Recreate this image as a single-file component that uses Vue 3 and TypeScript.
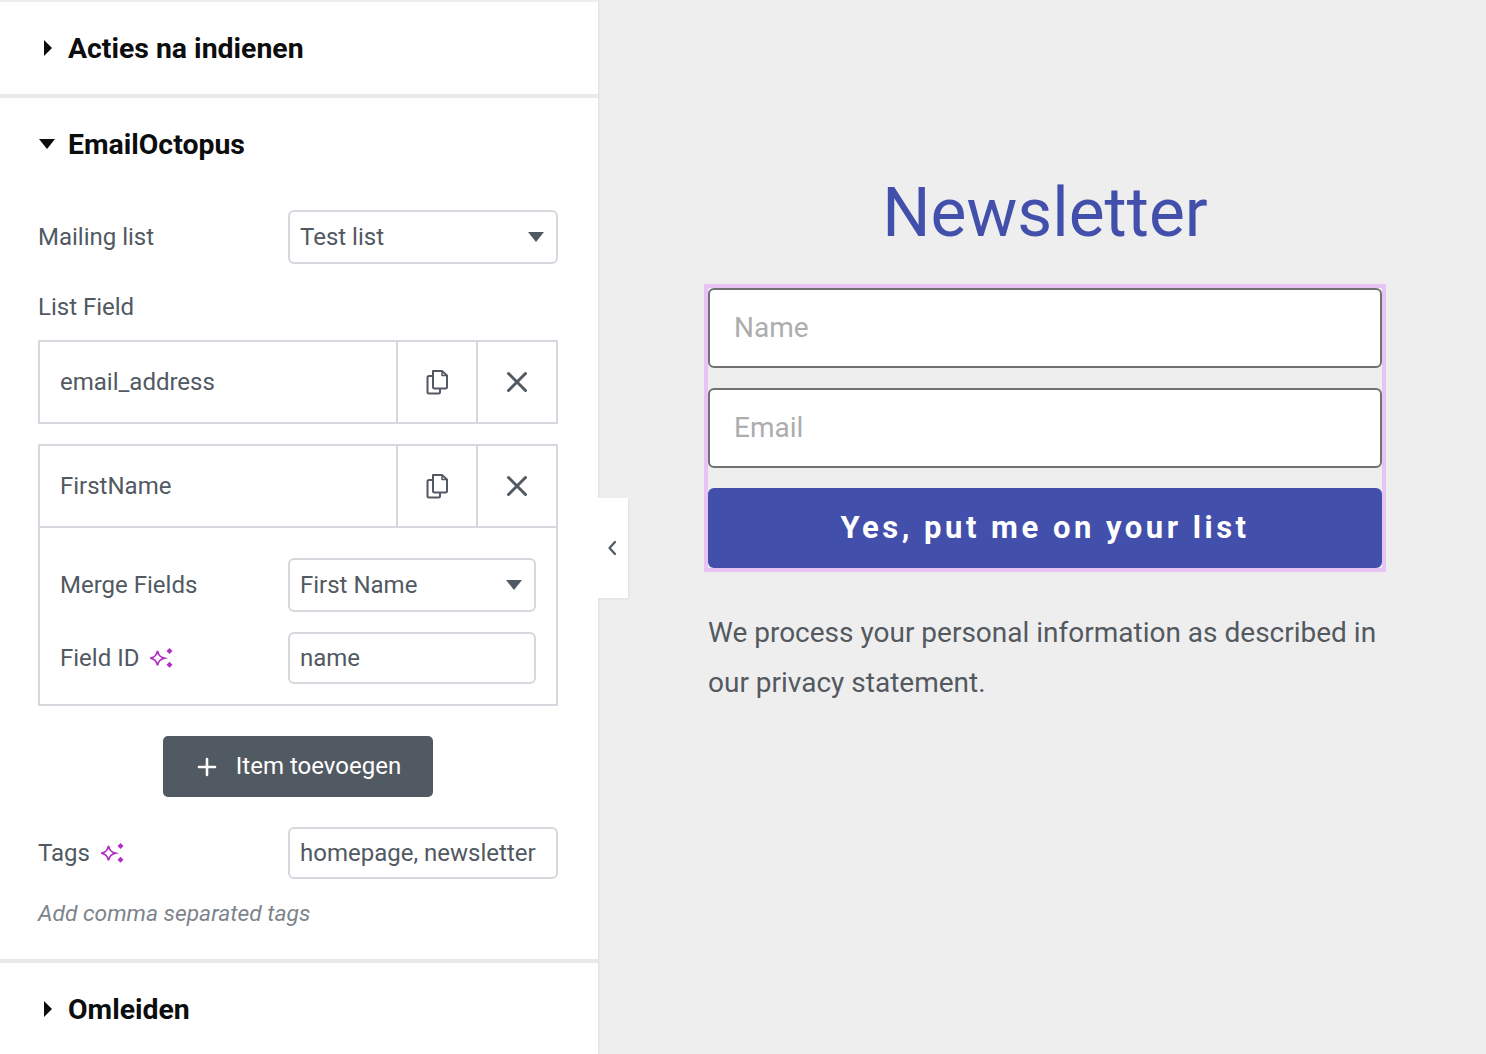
<script setup lang="ts">
const sparkle = {
  star: 'M7.5 5C8.400 9.300 9.900 11 14.500 12.200C9.900 13.400 8.400 15.100 7.500 19.400C6.600 15.100 5.100 13.400 0.500 12.200C5.100 11 6.600 9.300 7.500 5Z',
  top: 'M19.500 2L22.500 5L19.500 8L16.500 5Z',
  bottom: 'M19.500 15.800L22.500 18.800L19.500 21.800L16.500 18.800Z'
}
</script>

<template>
  <div class="page">
    <aside class="panel">
      <section class="section first">
        <header class="head">
          <span class="tri-right"></span>
          <h2>Acties na indienen</h2>
        </header>
      </section>

      <section class="section">
        <header class="head">
          <span class="tri-down"></span>
          <h2>EmailOctopus</h2>
        </header>
        <div class="body">
          <div class="row">
            <span class="label">Mailing list</span>
            <div class="control select">
              <span>Test list</span><i class="caret"></i>
            </div>
          </div>
          <div class="label list-label">List Field</div>

          <div class="item">
            <div class="item-head">
              <span class="item-title">email_address</span>
              <button class="tool" type="button" aria-label="Duplicate">
                <svg width="24" height="26" viewBox="0 0 24 26" fill="none" stroke="#515962" stroke-width="2" stroke-linejoin="round">
                  <path d="M8 2H17L22 6.500V18C22 19 21.500 19.500 20.500 19.500H9.500C8.500 19.500 8 19 8 18Z"/>
                  <path d="M17 2V6.500H22" stroke-width="1.500"/>
                  <path d="M8 7H4C3 7 2.500 7.500 2.500 8.500V23C2.500 24 3 24.500 4 24.500H13.500C14.500 24.500 15 24 15 23V19.500"/>
                </svg>
              </button>
              <button class="tool" type="button" aria-label="Remove">
                <svg width="22" height="22" viewBox="0 0 22 22" fill="none" stroke="#515962" stroke-width="3" stroke-linecap="round"><path d="M2.500 2.500L19.500 19.500M19.500 2.500L2.500 19.500"/></svg>
              </button>
            </div>
          </div>

          <div class="item open">
            <div class="item-head">
              <span class="item-title">FirstName</span>
              <button class="tool" type="button" aria-label="Duplicate">
                <svg width="24" height="26" viewBox="0 0 24 26" fill="none" stroke="#515962" stroke-width="2" stroke-linejoin="round">
                  <path d="M8 2H17L22 6.500V18C22 19 21.500 19.500 20.500 19.500H9.500C8.500 19.500 8 19 8 18Z"/>
                  <path d="M17 2V6.500H22" stroke-width="1.500"/>
                  <path d="M8 7H4C3 7 2.500 7.500 2.500 8.500V23C2.500 24 3 24.500 4 24.500H13.500C14.500 24.500 15 24 15 23V19.500"/>
                </svg>
              </button>
              <button class="tool" type="button" aria-label="Remove">
                <svg width="22" height="22" viewBox="0 0 22 22" fill="none" stroke="#515962" stroke-width="3" stroke-linecap="round"><path d="M2.500 2.500L19.500 19.500M19.500 2.500L2.500 19.500"/></svg>
              </button>
            </div>
            <div class="item-body">
              <div class="row">
                <span class="label">Merge Fields</span>
                <div class="control select small">
                  <span>First Name</span><i class="caret"></i>
                </div>
              </div>
              <div class="row second">
                <span class="label with-icon">Field ID
                  <svg class="spark" width="24" height="24" viewBox="0 0 24 24">
                    <path :d="sparkle.star" fill="none" stroke="#b22fc4" stroke-width="1.800"/>
                    <path :d="sparkle.top" fill="#b22fc4"/><path :d="sparkle.bottom" fill="#b22fc4"/>
                  </svg>
                </span>
                <div class="control small input">name</div>
              </div>
            </div>
          </div>

          <div class="add-wrap">
            <button class="add" type="button">
              <svg width="20" height="20" viewBox="0 0 20 20" stroke="#fff" stroke-width="2.600" stroke-linecap="round"><path d="M10 2V18M2 10H18"/></svg>
              <span class="add-text">Item toevoegen</span>
            </button>
          </div>

          <div class="row tags">
            <span class="label with-icon">Tags
              <svg class="spark" width="24" height="24" viewBox="0 0 24 24">
                <path :d="sparkle.star" fill="none" stroke="#b22fc4" stroke-width="1.800"/>
                <path :d="sparkle.top" fill="#b22fc4"/><path :d="sparkle.bottom" fill="#b22fc4"/>
              </svg>
            </span>
            <div class="control input tag-input">homepage, newsletter</div>
          </div>
          <p class="hint">Add comma separated tags</p>
        </div>
      </section>

      <section class="section last">
        <header class="head">
          <span class="tri-right"></span>
          <h2>Omleiden</h2>
        </header>
      </section>

      <button class="collapse" type="button" aria-label="Collapse">
        <svg class="chev" width="10" height="16" viewBox="0 0 10 16" fill="none" stroke="#515962" stroke-width="2.200" stroke-linecap="round" stroke-linejoin="round"><path d="M8 2L2.500 8L8 14"/></svg>
      </button>
    </aside>

    <main class="preview">
      <h1>Newsletter</h1>
      <form class="form" @submit.prevent>
        <input class="field" type="text" placeholder="Name" />
        <input class="field" type="text" placeholder="Email" />
        <button class="submit" type="submit">Yes, put me on your list</button>
      </form>
      <p class="note">We process your personal information as described in our privacy statement.</p>
    </main>
  </div>
</template>

<style>
html, body { margin: 0; background: #eeeeef; }
</style>

<style scoped>
.page {
  display: flex;
  width: 1486px;
  height: 1054px;
  overflow: hidden;
  font-family: Roboto, "Liberation Sans", sans-serif;
  color: #515962;
}
.panel {
  position: relative;
  width: 598px;
  flex: none;
  background: #fff;
  box-shadow: 1px 0 2px rgba(0, 0, 0, 0.06);
}
.section { border-bottom: 4px solid #e8e9ea; }
.section.first { border-top: 2px solid #eceded; }
.section.last { border-bottom: 0; }
.head {
  display: flex;
  align-items: center;
  height: 92px;
  padding-left: 38px;
}
.head h2 {
  margin: 0;
  font-size: 28.400px;
  font-weight: 700;
  color: #0c0d0e;
}
.tri-right, .tri-down { display: block; flex: none; }
.tri-right {
  width: 0;
  height: 0;
  margin: 0 16px 0 6px;
  border-left: 8px solid #0c0d0e;
  border-top: 8px solid transparent;
  border-bottom: 8px solid transparent;
}
.tri-down {
  width: 0;
  height: 0;
  margin: 0 13px 0 1px;
  border-top: 10px solid #0c0d0e;
  border-left: 8.500px solid transparent;
  border-right: 8.500px solid transparent;
}
.body { padding: 20px 40px 30px 38px; }
.row {
  display: flex;
  align-items: center;
  justify-content: space-between;
}
.label { font-size: 24px; line-height: 30px; color: #515962; }
.list-label { margin: 28px 0 18px; }
.with-icon { display: inline-flex; align-items: center; gap: 11px; }
.control {
  display: flex;
  align-items: center;
  box-sizing: border-box;
  width: 270px;
  height: 54px;
  padding: 0 10px;
  border: 2px solid #d5d8dc;
  border-radius: 6px;
  font-size: 24px;
  color: #515962;
  background: #fff;
}
.control.small { width: 248px; }
.control.input { height: 52px; }
.select { justify-content: space-between; padding-right: 12px; }
.caret {
  display: block;
  width: 0;
  height: 0;
  border-top: 10px solid #515962;
  border-left: 8.500px solid transparent;
  border-right: 8.500px solid transparent;
}
.item {
  border: 2px solid #d5d8dc;
  margin-bottom: 20px;
}
.item.open { margin-bottom: 30px; }
.item-head {
  display: flex;
  align-items: stretch;
  height: 80px;
}
.item-title {
  flex: 1;
  display: flex;
  align-items: center;
  padding-left: 20px;
  font-size: 24px;
  color: #515962;
}
.tool {
  display: flex;
  align-items: center;
  justify-content: center;
  width: 80px;
  padding: 0;
  border: 0;
  border-left: 2px solid #d5d8dc;
  background: #fff;
}
.item-body {
  border-top: 2px solid #d5d8dc;
  padding: 30px 20px 20px 20px;
}
.row.second { margin-top: 20px; }
.add-wrap { display: flex; justify-content: center; }
.add {
  display: flex;
  align-items: center;
  justify-content: center;
  gap: 19px;
  width: 270px;
  height: 61px;
  padding: 0 0 0 2px;
  border: 0;
  border-radius: 5px;
  background: #515962;
  color: #fff;
  font-family: Roboto, "Liberation Sans", sans-serif;
  font-size: 24px;
}
.add-text { margin-bottom: 2px; }
.row.tags { margin-top: 30px; }
.tag-input { padding-right: 0; white-space: nowrap; }
.hint {
  margin: 20px 0 0;
  font-size: 22.800px;
  line-height: 30px;
  font-style: italic;
  color: #7d848c;
}
.collapse {
  position: absolute;
  left: 598px;
  top: 498px;
  width: 30px;
  height: 100px;
  padding: 0;
  border: 0;
  background: #fff;
  box-shadow: 1px 1px 2px rgba(0, 0, 0, 0.06);
  display: flex;
  align-items: center;
  justify-content: center;
}
.chev { margin-right: 2px; }
.preview {
  flex: 1;
  box-sizing: border-box;
  padding: 170px 104px 0 110px;
  background: #eeeeef;
}
.preview h1 {
  margin: 0 0 36px;
  height: 82px;
  line-height: 86px;
  text-align: center;
  font-size: 67.700px;
  font-weight: 400;
  color: #4350ab;
}
.form {
  display: flex;
  flex-direction: column;
  gap: 20px;
  outline: 4px solid #e7c3f6;
}
.field {
  box-sizing: border-box;
  width: 100%;
  height: 80px;
  padding: 0 24px 2px;
  border: 2px solid #6f7175;
  border-radius: 6px;
  background: #fff;
  font-family: Roboto, "Liberation Sans", sans-serif;
  font-size: 28px;
}
.field::placeholder { color: #adadae; opacity: 1; }
.submit {
  height: 80px;
  padding: 0 0 2px;
  border: 0;
  border-radius: 6px;
  background: #4350ab;
  color: #fff;
  font-family: Roboto, "Liberation Sans", sans-serif;
  font-size: 31px;
  font-weight: 700;
  letter-spacing: 3.500px;
}
.note {
  margin: 40px 0 0;
  font-size: 28px;
  line-height: 50px;
  color: #54595f;
}
</style>
